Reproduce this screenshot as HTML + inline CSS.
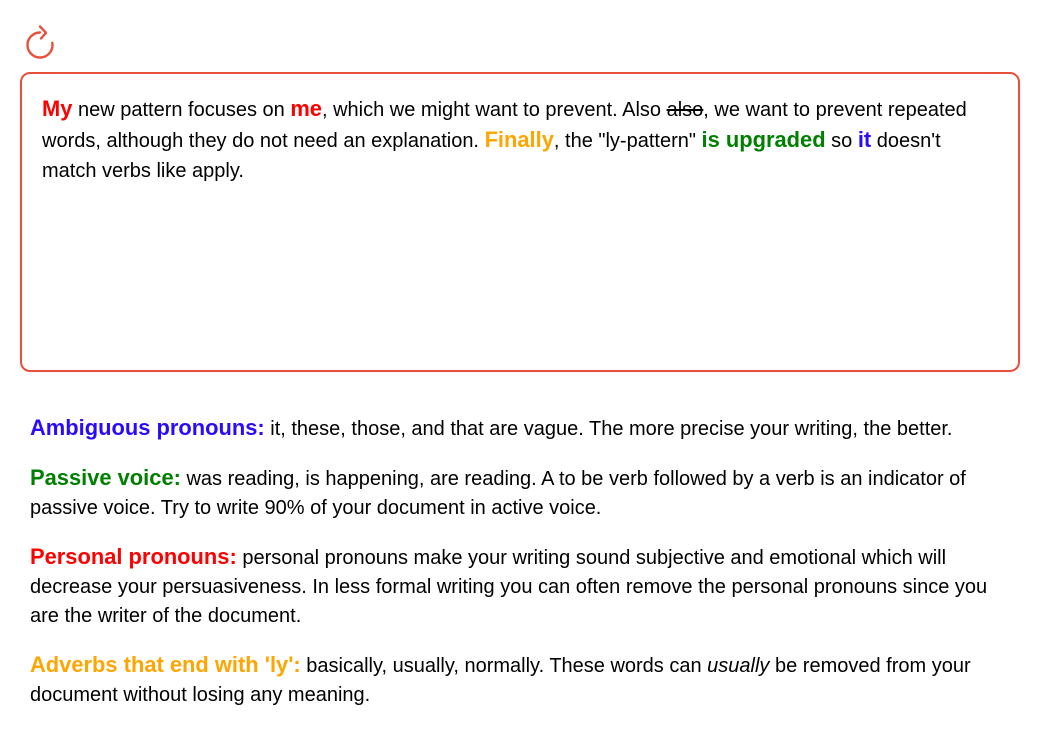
<!DOCTYPE html>
<html><head><meta charset="utf-8"><style>
body{margin:0;background:#fff;font-family:"Liberation Sans",sans-serif;color:#000;}
.icon{position:absolute;left:24px;top:24px;}
.box{position:absolute;left:20px;top:72px;width:996px;height:296px;border:2px solid #e8503a;border-radius:10px;box-sizing:content-box;}
.box p{margin:0;position:absolute;left:20px;top:21px;right:30px;font-size:20px;line-height:30.5px;}
.r,.o,.g,.b{font-weight:bold;font-size:21.9px;line-height:10px;}
.r{color:#f00}.o{color:#ffa500}.g{color:#008000}.b{color:#2a0aff}
.notes{position:absolute;left:30px;top:415px;width:990px;font-size:20px;line-height:29px;}
.notes p{margin:0 0 21px 0;}
</style></head><body>
<svg class="icon" width="34" height="38" viewBox="0 0 34 38"><path d="M16 8.5 A12.5 12.5 0 1 0 28.3 18.8" fill="none" stroke="#e8503a" stroke-width="2.4" stroke-linecap="round"/><path d="M16 2.5 L22 8.8 L17 14.5" fill="none" stroke="#e8503a" stroke-width="2.4" stroke-linecap="round" stroke-linejoin="round"/></svg>
<div class="box"><p><span class="r">My</span> new pattern focuses on <span class="r">me</span>, which we might want to prevent. Also <s>also</s>, we want to prevent repeated words, although they do not need an explanation. <span class="o">Finally</span>, the "ly-pattern" <span class="g">is upgraded</span> so <span class="b">it</span> doesn't match verbs like apply.</p></div>
<div class="notes">
<p><span class="b">Ambiguous pronouns:</span> it, these, those, and that are vague. The more precise your writing, the better.</p>
<p><span class="g">Passive voice:</span> was reading, is happening, are reading. A to be verb followed by a verb is an indicator of passive voice. Try to write 90% of your document in active voice.</p>
<p><span class="r">Personal pronouns:</span> personal pronouns make your writing sound subjective and emotional which will decrease your persuasiveness. In less formal writing you can often remove the personal pronouns since you are the writer of the document.</p>
<p><span class="o">Adverbs that end with 'ly':</span> basically, usually, normally. These words can <i>usually</i> be removed from your document without losing any meaning.</p>
</div>
</body></html>
